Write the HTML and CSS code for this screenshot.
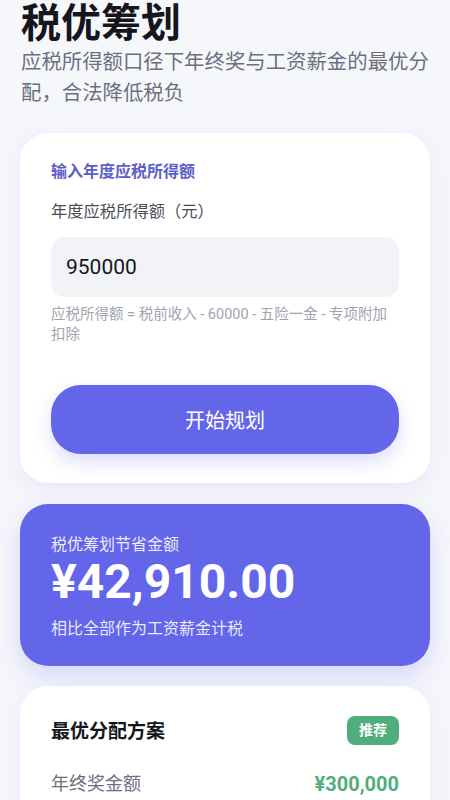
FILE: index.html
```html
<!DOCTYPE html>
<html lang="zh-CN">
<head>
<meta charset="utf-8">
<meta name="viewport" content="width=450">
<link rel="stylesheet" href="styles.css">
</head>
<body>
<div class="page">
  <header class="head">
    <h1 class="title">税优筹划</h1>
    <p class="subtitle">应税所得额口径下年终奖与工资薪金的最优分配，合法降低税负</p>
  </header>

  <section class="card form-card">
    <div class="section-label">输入年度应税所得额</div>
    <label class="field-label" for="income">年度应税所得额（元）</label>
    <input class="field-input" id="income" type="text" value="950000">
    <p class="hint">应税所得额 = 税前收入 - 60000 - 五险一金 - 专项附加扣除</p>
    <button class="primary-btn" type="button">开始规划</button>
  </section>

  <section class="card saving-card">
    <div class="saving-label">税优筹划节省金额</div>
    <div class="saving-amount">¥42,910.00</div>
    <div class="saving-note">相比全部作为工资薪金计税</div>
  </section>

  <section class="card plan-card">
    <div class="plan-head">
      <h2 class="plan-title">最优分配方案</h2>
      <span class="badge">推荐</span>
    </div>
    <div class="plan-row">
      <span class="row-label">年终奖金额</span>
      <span class="row-value">¥300,000</span>
    </div>
  </section>
</div>
</body>
</html>
```

FILE: styles.css
```css
* { box-sizing: border-box; }
html, body { margin: 0; padding: 0; }
body {
  background: #f6f7fb;
  font-family: Roboto, "Noto Sans CJK SC", "Noto Sans", sans-serif;
  color: #1f2233;
}
.page {
  padding: 0 20px 40px;
  display: flex;
  flex-direction: column;
}
.head { margin-bottom: 24px; }
.title {
  margin: 0;
  font-size: 40px;
  line-height: 47px;
  font-weight: 700;
  color: #15161c;
  padding-left: 1px;
}
.subtitle {
  margin: 0;
  font-size: 20.4px;
  line-height: 31px;
  color: #6b7080;
  padding-left: 1px;
}
.card {
  background: #ffffff;
  border-radius: 28px;
  box-shadow: 0 6px 22px rgba(99, 102, 232, 0.10);
  padding: 28px 31px 29px;
}
.form-card {
  display: flex;
  flex-direction: column;
}
.section-label {
  font-size: 16px;
  line-height: 22px;
  font-weight: 600;
  color: #5c60c8;
}
.field-label {
  margin-top: 17px;
  font-size: 16.3px;
  line-height: 24px;
  color: #4a4d57;
}
.field-input {
  margin-top: 13px;
  height: 60px;
  border: none;
  border-radius: 14px;
  background: #f1f3f7;
  padding: 0 15px;
  font-family: Roboto, "Noto Sans CJK SC", sans-serif;
  font-size: 21px;
  color: #15161c;
  outline: none;
  width: 100%;
}
.hint {
  margin: 8px 0 0;
  font-size: 14.5px;
  line-height: 20px;
  color: #a0a4ae;
}
.primary-btn {
  margin-top: 40px;
  height: 69px;
  border: none;
  border-radius: 30px;
  background: #6366e8;
  color: #ffffff;
  font-family: "Noto Sans CJK SC", sans-serif;
  font-size: 20px;
  box-shadow: 0 8px 18px rgba(99, 102, 232, 0.22);
}
.saving-card {
  margin-top: 21px;
  background: #6366e8;
  color: #ffffff;
  padding: 29px 31px 25px;
  box-shadow: 0 10px 24px rgba(99, 102, 232, 0.22);
}
.saving-label {
  font-size: 16px;
  line-height: 24px;
  color: rgba(255, 255, 255, 0.9);
}
.saving-amount {
  margin-top: -2px;
  font-size: 48px;
  line-height: 54px;
  font-weight: 700;
  letter-spacing: 0;
}
.saving-note {
  margin-top: 8px;
  font-size: 16px;
  line-height: 24px;
  color: rgba(255, 255, 255, 0.88);
}
.plan-card {
  margin-top: 20px;
  padding-top: 31px;
}
.plan-head {
  display: flex;
  align-items: center;
  justify-content: space-between;
}
.plan-title {
  margin: 0;
  font-size: 19px;
  line-height: 30px;
  font-weight: 700;
  color: #15161c;
}
.badge {
  background: #4fae7b;
  color: #ffffff;
  font-size: 14px;
  font-weight: 700;
  line-height: 29px;
  padding: 0 12px;
  border-radius: 8px;
  margin-top: -4px;
}
.plan-row {
  margin-top: 23px;
  display: flex;
  align-items: center;
  justify-content: space-between;
}
.row-label {
  font-size: 18px;
  line-height: 28px;
  color: #6b7080;
}
.row-value {
  font-size: 20px;
  line-height: 28px;
  font-weight: 700;
  color: #4fae7b;
}
```
